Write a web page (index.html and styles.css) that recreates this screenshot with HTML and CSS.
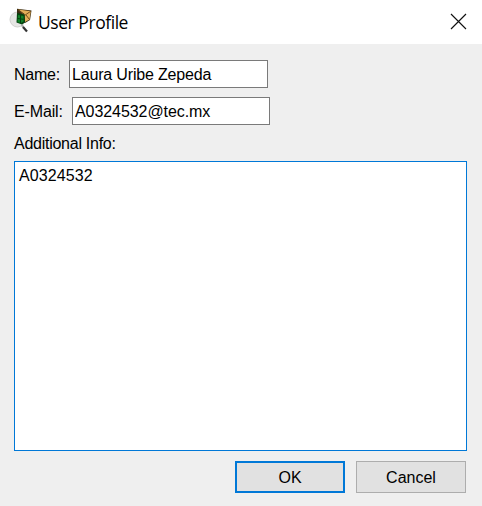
FILE: index.html
```html
<!DOCTYPE html>
<html lang="en">
<head>
<meta charset="utf-8">
<title>User Profile</title>
<link rel="stylesheet" href="styles.css">
</head>
<body>
<main class="dialog">
  <header class="titlebar">
    <svg class="app-icon" width="24" height="26" viewBox="0 0 24 26" aria-hidden="true">
      <circle cx="8.500" cy="11.500" r="7.500" fill="#e6e6e4" stroke="#d0d0ce"/>
      <path d="M12.500 17l2 2" stroke="#aaa" stroke-width="2"/>
      <path d="M14 19l4 4.500" stroke="#333" stroke-width="2.200"/>
      <path d="M8 .8l14.500 1.700-1.500 9.500-5 3-8-8z" fill="#3a2c12"/>
      <path d="M9.500 1.500l12.300 1.700-1.300 8.300-4.500 2.500-.5-8z" fill="#e3ae58"/>
      <path d="M9 1.500l6.500 6 6.500-4.500M17 7l3.500 4.500" fill="none" stroke="#73501d"/>
      <path d="M8 5l7.500 1.500.5 8-3 2-5.500-2z" fill="#05420f"/>
      <path d="M9 7l5.500 1v5.500l-2.500 1.500-3.500-1z" fill="#118126"/>
      <path d="M11.500 7v8M8.500 10.500l6 .8" stroke="#053d0e"/>
    </svg>
    <h1 class="title">User Profile</h1>
    <svg class="close" width="17" height="17" viewBox="0 0 17 17" aria-label="Close">
      <path d="M1 1l15 15M16 1L1 16" stroke="#111" stroke-width="1.150"/>
    </svg>
  </header>
  <form class="form">
    <div class="row">
      <label class="label label-name" for="name">Name:</label>
      <input class="field field-name" id="name" value="Laura Uribe Zepeda">
    </div>
    <div class="row row-email">
      <label class="label label-email" for="email">E-Mail:</label>
      <input class="field field-email" id="email" value="A0324532@tec.mx">
    </div>
    <label class="label label-info" for="info">Additional Info:</label>
    <textarea class="info" id="info">A0324532</textarea>
    <div class="actions">
      <button class="button primary" type="button">OK</button>
      <button class="button" type="button">Cancel</button>
    </div>
  </form>
</main>
</body>
</html>
```
FILE: styles.css
```css
* { box-sizing: border-box; }
body { margin: 0; }
.dialog {
  width: 482px;
  height: 506px;
  background: #efefef;
  color: #000;
  font: 16px "Liberation Sans", Arial, sans-serif;
}
.titlebar {
  display: flex;
  align-items: center;
  height: 44px;
  padding: 0 15px 0 9px;
  background: #fff;
}
.app-icon { margin-bottom: 2px; }
.title {
  flex: 1;
  margin: 0 0 0 5px;
  font: 17.5px/24px "Open Sans", "Noto Sans", sans-serif;
  letter-spacing: -0.45px;
}
.close { margin-bottom: 1px; }
.form { padding: 16px 15px 0 14px; }
.row { display: flex; align-items: center; height: 28px; }
.row-email { margin-top: 9px; }
.label { color: #000; letter-spacing: -0.26px; white-space: nowrap; }
.label-name { width: 55px; padding-top: 2px; }
.label-email { width: 58px; padding-top: 2px; letter-spacing: -0.15px; }
.label-info { display: block; height: 36px; line-height: 38px; }
.field {
  height: 28px;
  margin: 0;
  padding: 2px 2px 0;
  border: 1px solid #7a7a7a;
  border-radius: 0;
  background: #fff;
  color: #000;
  font: inherit;
  outline: 0;
}
.field-name { width: 199px; letter-spacing: -0.17px; }
.field-email { width: 198px; letter-spacing: -0.07px; }
.info {
  display: block;
  width: 453px;
  height: 290px;
  padding: 4px;
  border: 1px solid #0078d7;
  border-radius: 0;
  background: #fff;
  color: #000;
  font: inherit;
  line-height: 19px;
  letter-spacing: 0.1px;
  resize: none;
  outline: 0;
}
.actions { display: flex; justify-content: flex-end; gap: 11px; margin: 10px 1px 0 0; }
.button {
  width: 110px;
  height: 32px;
  padding: 2px 0 0;
  border: 1px solid #adadad;
  border-radius: 0;
  background: #e1e1e1;
  color: #000;
  font: inherit;
}
.primary { border: 2px solid #0078d7; }
```
